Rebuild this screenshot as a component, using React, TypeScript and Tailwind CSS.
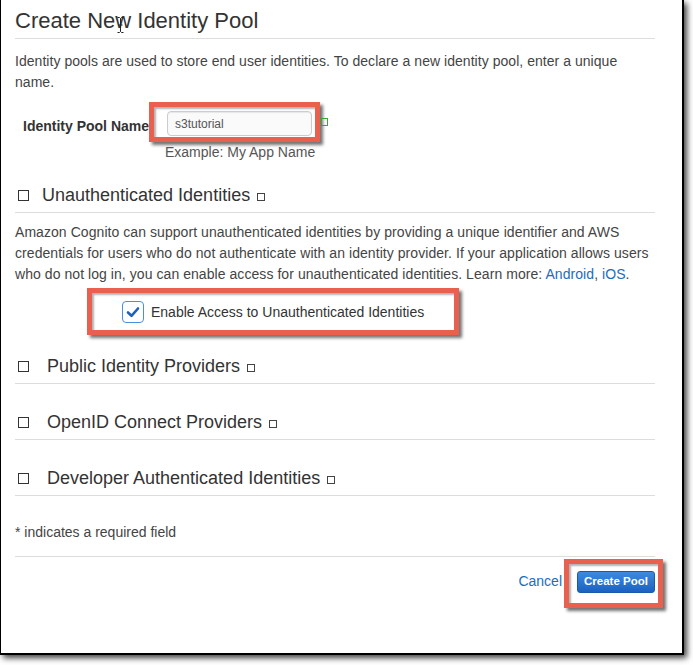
import React from "react";

const Heading = ({ text, gap }: { text: string; gap: string }) => (
  <div className="flex items-center h-[24px] pl-[3px]">
    <span className="inline-block w-[11px] h-[11px] border-[1.5px] border-[#333] shrink-0" />
    <span className={`${gap} text-[18px] leading-[24px] text-[#333] whitespace-nowrap`}>{text}</span>
    <span className="inline-block w-[8px] h-[8px] border border-[#444] ml-[7px] mt-[3px] shrink-0" />
  </div>
);

export default function App() {
  return (
    <div className="w-[693px] h-[665px] bg-white relative font-['Liberation_Sans',Arial,sans-serif]">
      <div className="w-[684px] h-[655px] bg-white border-l border-r-2 border-b-2 border-black shadow-[3px_3px_6px_rgba(0,0,0,0.75)] relative">
        <div className="w-[654px] pl-[14px]">
          {/* Title */}
          <div className="pt-[8px] pb-[4px] border-b border-[#ddd]">
            <h1 className="text-[22px] leading-[26px] text-[#333]">Create New Identity Pool</h1>
          </div>
          <p className="mt-[12px] text-[14px] leading-[21px] text-[#444] tracking-[0.04px]">
            Identity pools are used to store end user identities. To declare a new identity pool, enter a unique
            <br />
            name.
          </p>

          {/* Name row */}
          <div className="mt-[9px] flex items-start h-[40px]">
            <div className="w-[126px] ml-[8px] pt-[14px] text-[14px] leading-[20px] font-bold text-[#333] whitespace-nowrap">
              Identity Pool Name
            </div>
            <div className="border-[5px] border-[#ea604e] pl-[13px] pr-[3px] pt-[4px] pb-[1px] bg-white shadow-[3px_3px_3px_rgba(0,0,0,0.55),inset_2px_2px_2px_rgba(0,0,0,0.3)]">
              <div className="w-[145px] h-[25px] border border-[#ccc] rounded-[4px] bg-[#fafafa] shadow-[inset_0_1px_1px_rgba(0,0,0,0.08)] pl-[7px] flex items-center text-[12px] text-[#555]">
                s3tutorial
              </div>
            </div>
            <span className="inline-block w-[7px] h-[8px] border border-[#3aa53a] mt-[16px] ml-[1px]" />
          </div>
          <div className="ml-[150px] text-[14px] leading-[20px] text-[#555]">Example: My App Name</div>

          {/* Unauthenticated */}
          <div className="mt-[21px] pb-[5px] border-b border-[#ddd]">
            <Heading text="Unauthenticated Identities" gap="ml-[13px]" />
          </div>
          <p className="mt-[9px] text-[14px] leading-[21px] text-[#444] whitespace-nowrap tracking-[0.06px]">
            Amazon Cognito can support unauthenticated identities by providing a unique identifier and AWS
            <br />
            credentials for users who do not authenticate with an identity provider. If your application allows users
            <br />
            who do not log in, you can enable access for unauthenticated identities. Learn more:{" "}
            <span className="text-[#1a6dc2]">Android</span>, <span className="text-[#1a6dc2]">iOS</span>.
          </p>
          <div className="mt-[3px] ml-[72px] w-[372px] h-[47px] border-[5px] border-[#ea604e] bg-white flex items-center pl-[30px] shadow-[3px_3px_3px_rgba(0,0,0,0.55),inset_2px_2px_2px_rgba(0,0,0,0.3)]">
            <span className="w-[22px] h-[22px] rounded-[4px] border border-[#4a8fdb] bg-white flex items-center justify-center shrink-0">
              <svg width="14" height="12" viewBox="0 0 14 12">
                <path d="M2 6.5 L5.5 9.8 L12 2.5" fill="none" stroke="#1d62b8" strokeWidth="2.6" strokeLinecap="round" strokeLinejoin="round" />
              </svg>
            </span>
            <span className="ml-[7px] mt-[2px] text-[14px] text-[#333] whitespace-nowrap">Enable Access to Unauthenticated Identities</span>
          </div>

          {/* Other sections */}
          <div className="mt-[19px] pb-[5px] border-b border-[#ddd]">
            <Heading text="Public Identity Providers" gap="ml-[18px]" />
          </div>
          <div className="mt-[26px] pb-[5px] border-b border-[#ddd]">
            <Heading text="OpenID Connect Providers" gap="ml-[18px]" />
          </div>
          <div className="mt-[26px] pb-[5px] border-b border-[#ddd]">
            <Heading text="Developer Authenticated Identities" gap="ml-[18px]" />
          </div>

          <div className="mt-[26px] pb-[14px] border-b border-[#ddd] text-[14px] leading-[20px] text-[#444]">
            * indicates a required field
          </div>

          {/* Buttons */}
          <div className="mt-[2px] flex justify-end items-center mr-[-8px]">
            <span className="text-[14px] text-[#1a6dc2] mr-[2px] mt-[-4px]">Cancel</span>
            <div className="border-[5px] border-[#ea604e] bg-white pl-[8px] pr-[3px] pt-[7px] pb-[10px] shadow-[3px_3px_3px_rgba(0,0,0,0.55),inset_2px_2px_2px_rgba(0,0,0,0.3)]">
              <div className="w-[78px] h-[22px] rounded-[3px] border border-[#1a5aa8] bg-gradient-to-b from-[#3d8ae0] to-[#1b62c0] text-white font-bold text-[11.5px] flex items-center justify-center">
                Create Pool
              </div>
            </div>
          </div>
        </div>

        {/* I-beam cursor */}
        <svg className="absolute left-[116px] top-[17px]" width="7" height="16" viewBox="0 0 7 16">
          <path d="M0.5 0.5 H2.5 L3.5 1.5 L4.5 0.5 H6.5 M3.5 1.5 V14.5 M0.5 15.5 H2.5 L3.5 14.5 L4.5 15.5 H6.5 M1.5 8 H5.5" fill="none" stroke="#222" strokeWidth="1" />
        </svg>
      </div>
    </div>
  );
}
